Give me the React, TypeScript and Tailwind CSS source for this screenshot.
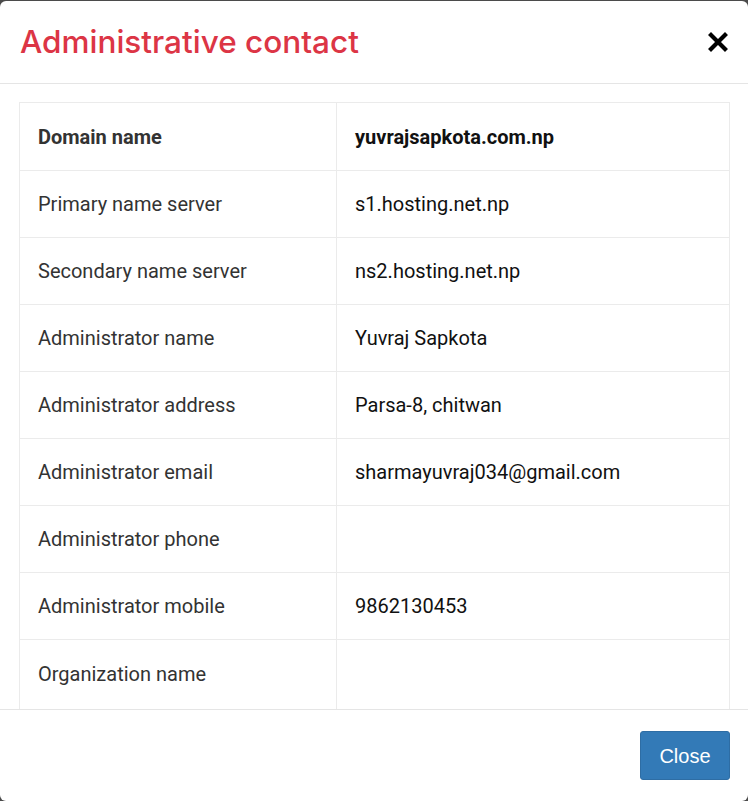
type Row = {
  label: string;
  value: string;
  bold?: boolean;
};

const rows: Row[] = [
  { label: 'Domain name', value: 'yuvrajsapkota.com.np', bold: true },
  { label: 'Primary name server', value: 's1.hosting.net.np' },
  { label: 'Secondary name server', value: 'ns2.hosting.net.np' },
  { label: 'Administrator name', value: 'Yuvraj Sapkota' },
  { label: 'Administrator address', value: 'Parsa-8, chitwan' },
  { label: 'Administrator email', value: 'sharmayuvraj034@gmail.com' },
  { label: 'Administrator phone', value: '' },
  { label: 'Administrator mobile', value: '9862130453' },
  { label: 'Organization name', value: '' },
];

const CloseIcon = () => (
  <svg width="20" height="20" viewBox="0 0 20 20" className="text-black">
    <path d="M3 3 L17 17 M17 3 L3 17" stroke="currentColor" strokeWidth="4.2" strokeLinecap="square" fill="none" />
  </svg>
);

const App = () => {
  return (
    <div className="h-[801px] w-[748px] overflow-hidden bg-[#4b4b4b] pt-px font-['Roboto',sans-serif]">
      <div className="flex h-[800px] flex-col overflow-hidden rounded-md bg-white">
        <div className="flex h-[83px] shrink-0 items-center justify-between border-b border-[#e5e5e5] pl-5 pr-5">
          <h4 className="font-['Inter',sans-serif] text-[31.5px] font-medium text-[#dc3545]">
            Administrative contact
          </h4>
          <CloseIcon />
        </div>
        <div className="flex-1 overflow-hidden px-[18px] pt-[18px]">
          <div className="ml-px w-[711px] border border-b-0 border-[#ebebeb]">
            {rows.map((row, i) => (
              <div
                key={row.label}
                className={`grid grid-cols-[317px_1fr] ${i === rows.length - 1 ? 'h-[90px]' : 'h-[67px]'} ${i > 0 ? 'border-t border-[#ebebeb]' : ''}`}
              >
                <div
                  className={`flex border-r border-[#ebebeb] pl-[18px] text-[20px] text-[#333] ${i === rows.length - 1 ? 'items-start pt-[19px]' : 'items-center'} ${row.bold ? 'font-bold' : ''}`}
                >
                  {row.label}
                </div>
                <div className={`flex items-center pl-[18px] text-[20px] text-[#111] ${row.bold ? 'font-bold' : ''}`}>
                  {row.value}
                </div>
              </div>
            ))}
          </div>
        </div>
        <div className="flex h-[92px] shrink-0 justify-end border-t border-[#e5e5e5] pr-[18px] pt-[21px]">
          <button className="h-[49px] w-[90px] rounded-[3px] border border-[#2e6da4] bg-[#337ab7] font-['Liberation_Sans',sans-serif] text-[20px] text-white">
            Close
          </button>
        </div>
      </div>
    </div>
  );
};

export default App;
